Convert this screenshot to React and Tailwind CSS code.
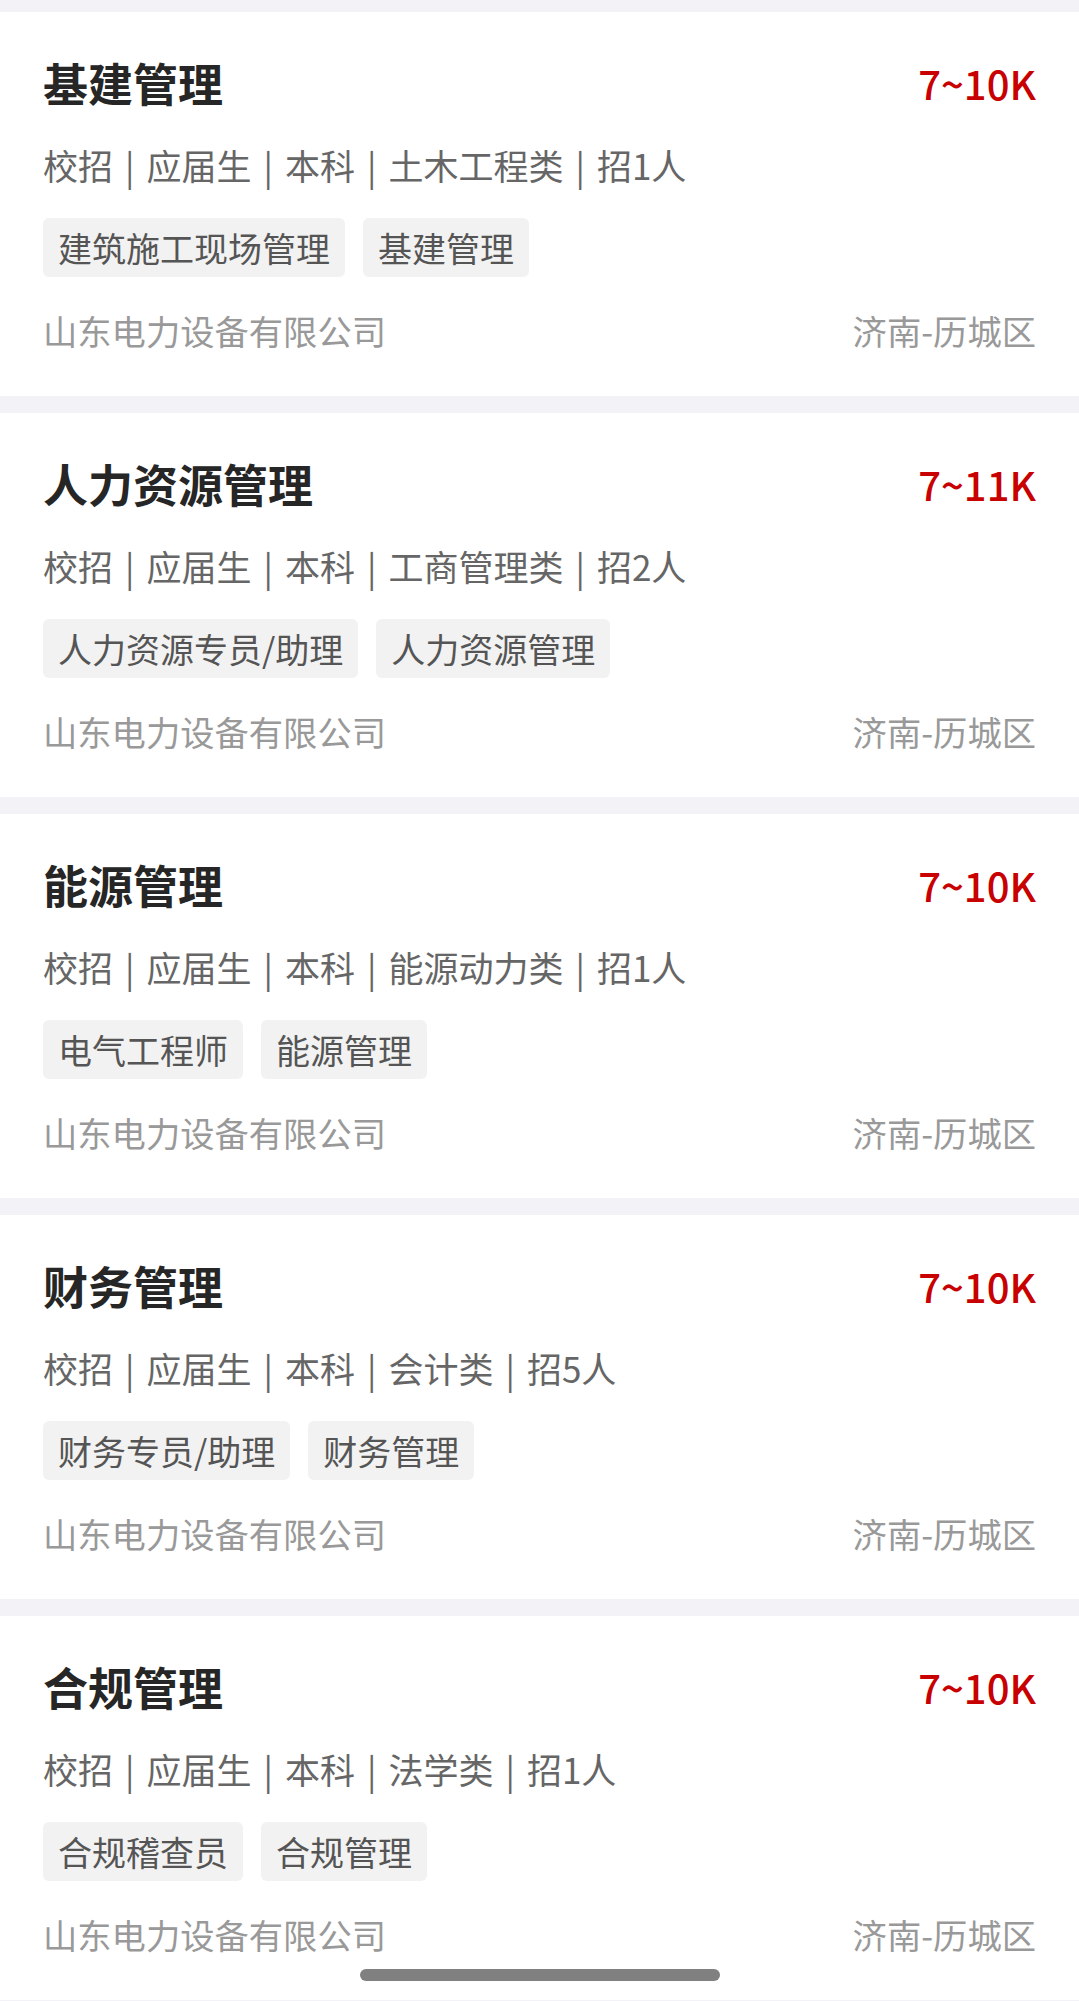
import React from 'react'

const jobs = [
  { title: '基建管理', salary: '7~10K', major: '土木工程类', count: 1, tags: ['建筑施工现场管理', '基建管理'] },
  { title: '人力资源管理', salary: '7~11K', major: '工商管理类', count: 2, tags: ['人力资源专员/助理', '人力资源管理'] },
  { title: '能源管理', salary: '7~10K', major: '能源动力类', count: 1, tags: ['电气工程师', '能源管理'] },
  { title: '财务管理', salary: '7~10K', major: '会计类', count: 5, tags: ['财务专员/助理', '财务管理'] },
  { title: '合规管理', salary: '7~10K', major: '法学类', count: 1, tags: ['合规稽查员', '合规管理'] },
]

function JobCard({ job }) {
  const meta = ['校招', '应届生', '本科', job.major, `招${job.count}人`]
  return (
    <div className="bg-white px-[43px] pt-[46px] pb-[46px]">
      {/* Title + salary */}
      <div className="flex items-center justify-between h-[50px]">
        <h2 className="text-[45px] leading-[50px] font-semibold text-[#262626]">{job.title}</h2>
        <span className="text-[40px] leading-[50px] font-medium text-[#c80000]">{job.salary}</span>
      </div>

      {/* Meta */}
      <div className="mt-[37px] text-[35px] leading-[40px] text-[#666]">
        {meta.map((m, i) => (
          <React.Fragment key={i}>
            {i > 0 && <span className="mx-[12px]">|</span>}
            {m}
          </React.Fragment>
        ))}
      </div>

      {/* Tags */}
      <div className="mt-[33px] flex gap-[18px]">
        {job.tags.map((t) => (
          <span key={t} className="h-[59px] px-[15px] flex items-center rounded-[6px] bg-[#f2f2f2] text-[34px] text-[#555]">
            {t}
          </span>
        ))}
      </div>

      {/* Company + location */}
      <div className="mt-[33px] flex items-center justify-between text-[34.3px] leading-[40px] text-[#999]">
        <span>山东电力设备有限公司</span>
        <span>济南-历城区</span>
      </div>
    </div>
  )
}

export default function App() {
  return (
    <div
      className="relative w-[1079px] h-[2001px] overflow-hidden bg-[#f3f3f7] pt-[12px]"
      style={{ fontFamily: '"Noto Sans CJK SC", "Noto Sans", sans-serif' }}
    >
      <div className="flex flex-col gap-[17px]">
        {jobs.map((job) => (
          <JobCard key={job.title} job={job} />
        ))}
      </div>
      {/* home indicator */}
      <div className="absolute left-[360px] top-[1969px] w-[360px] h-[12px] rounded-full bg-[#808080]" />
    </div>
  )
}
